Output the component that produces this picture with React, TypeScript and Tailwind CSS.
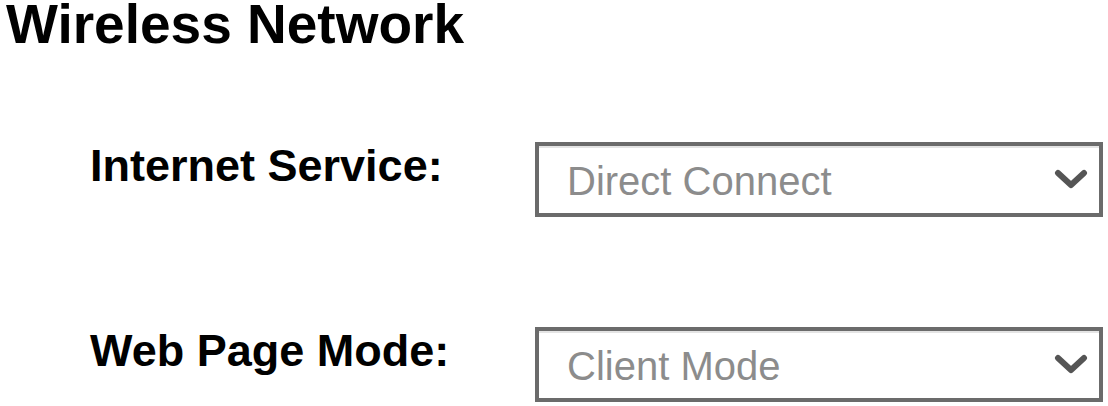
import React from 'react';

const font = { fontFamily: '"Liberation Sans", Arial, sans-serif' };

function Chevron() {
  return (
    <svg width="34" height="21" viewBox="0 0 34 21" fill="none" stroke="#555555" strokeWidth="6" strokeLinecap="round" strokeLinejoin="round">
      <polyline points="4,4 17,16 30,4" />
    </svg>
  );
}

function SelectRow({ label, value, className }: { label: string; value: string; className?: string }) {
  return (
    <div className={`flex items-start ${className ?? ''}`}>
      <div className="w-[445px] pt-[1px] text-[45px] leading-none font-bold text-black">{label}</div>
      <div className="flex h-[75px] w-[568px] items-center justify-between border-4 border-[#6b6b6b] bg-white pl-[28px] pr-[11px] shadow-[inset_0_2px_0_#e4e4e4]">
        <span className="pt-[3px] text-[40px] leading-none text-[#8c8c8c]">{value}</span>
        <Chevron />
      </div>
    </div>
  );
}

export default function App() {
  return (
    <div className="h-[406px] w-[1108px] overflow-hidden bg-white" style={font}>
      <h1 className="pl-[6px] text-[55px] leading-[48px] font-bold text-black">Wireless Network</h1>
      <div className="pl-[90px]">
        <SelectRow label="Internet Service:" value="Direct Connect" className="mt-[94px]" />
        <SelectRow label="Web Page Mode:" value="Client Mode" className="mt-[110px]" />
      </div>
    </div>
  );
}
